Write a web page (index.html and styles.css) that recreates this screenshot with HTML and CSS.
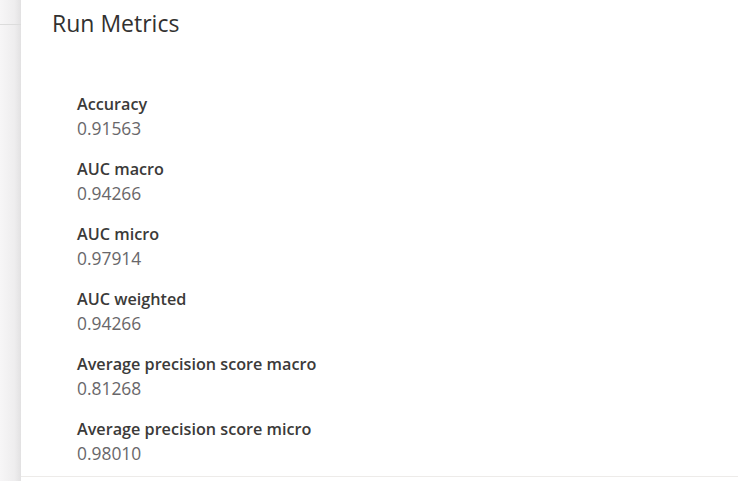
FILE: index.html
```html
<!DOCTYPE html>
<html>
<head>
<meta charset="utf-8">
<link rel="stylesheet" href="styles.css">
</head>
<body>
<div class="app">
  <div class="rail"><div class="rail-line"></div></div>
  <div class="panel">
    <h1 class="title">Run Metrics</h1>
    <dl class="metrics">
      <div class="metric"><dt class="label">Accuracy</dt><dd class="value">0.91563</dd></div>
      <div class="metric"><dt class="label">AUC macro</dt><dd class="value">0.94266</dd></div>
      <div class="metric"><dt class="label">AUC micro</dt><dd class="value">0.97914</dd></div>
      <div class="metric"><dt class="label">AUC weighted</dt><dd class="value">0.94266</dd></div>
      <div class="metric"><dt class="label">Average precision score macro</dt><dd class="value">0.81268</dd></div>
      <div class="metric"><dt class="label">Average precision score micro</dt><dd class="value">0.98010</dd></div>
    </dl>
  </div>
</div>
</body>
</html>
```
FILE: styles.css
```css
html, body {
  margin: 0;
  padding: 0;
  background: #ffffff;
  font-family: "Open Sans", "Noto Sans", sans-serif;
}
.app {
  display: flex;
  height: 481px;
  overflow: hidden;
}
.rail {
  width: 21px;
  flex: none;
  background: linear-gradient(to right, #f7f6f7, #eeedee 70%, #e2e1e2);
}
.rail-line {
  margin-top: 24px;
  height: 1px;
  background: #dcdcdc;
}
.panel {
  flex: 1;
  height: 476px;
  border-bottom: 1px solid #edebe9;
  padding-left: 31px;
  box-sizing: content-box;
}
.title {
  margin: 9px 0 0;
  font-size: 23px;
  font-weight: 400;
  line-height: 28px;
  color: #323130;
}
.metrics {
  margin: 55px 0 0 25px;
  display: flex;
  flex-direction: column;
  gap: 17px;
}
.metric {
  display: flex;
  flex-direction: column;
}
.label {
  font-size: 16.2px;
  font-weight: 600;
  line-height: 24px;
  color: #3b3a39;
}
.value {
  margin: 0;
  font-size: 17.4px;
  line-height: 24px;
  color: #69676a;
}
```
